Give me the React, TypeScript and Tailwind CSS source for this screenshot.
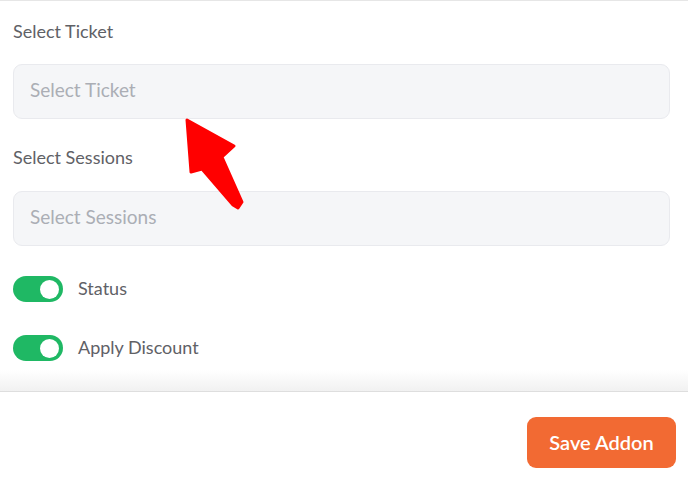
import React from "react";

function Toggle() {
  return (
    <div className="w-[50px] h-[26px] rounded-full bg-[#1fb864] flex items-center justify-end pr-[4px] shrink-0">
      <div className="w-[19px] h-[19px] rounded-full bg-white" />
    </div>
  );
}

export default function App() {
  return (
    <div
      className="relative w-[688px] h-[481px] bg-white overflow-hidden"
      style={{ fontFamily: "Lato, 'Noto Sans', sans-serif" }}
    >
      <div className="h-px bg-[#e6e6e6]" />
      <div className="pl-[13px] pr-[18px]">
        <div className="mt-[18px] h-[24px] leading-[24px] text-[18px] text-[#5f6166]">Select Ticket</div>
        <div className="mt-[21px] h-[55px] rounded-[9px] bg-[#f5f6f8] border border-[#e9eaee] flex items-center pl-[16px] pb-[3px] text-[19px] leading-[24px] text-[#abaeb5]">
          Select Ticket
        </div>
        <div className="mt-[26px] h-[24px] leading-[24px] text-[18px] text-[#5f6166]">Select Sessions</div>
        <div className="mt-[22px] h-[55px] rounded-[9px] bg-[#f5f6f8] border border-[#e9eaee] flex items-center pl-[16px] pb-[3px] text-[19px] leading-[24px] text-[#abaeb5]">
          Select Sessions
        </div>
        <div className="mt-[30px] flex items-center gap-[15px]">
          <Toggle />
          <span className="text-[18px] leading-[24px] pb-[2px] text-[#5f6166]">Status</span>
        </div>
        <div className="mt-[33px] flex items-center gap-[15px]">
          <Toggle />
          <span className="text-[18px] leading-[24px] pb-[2px] text-[#5f6166]">Apply Discount</span>
        </div>
      </div>
      <div className="mt-[9px] h-[22px] bg-gradient-to-b from-white to-[#f1f1f1] border-b border-[#dedede]" />
      <div className="flex justify-end pr-[12px] pt-[25px]">
        <button className="w-[149px] h-[51px] rounded-[9px] bg-[#f26a33] text-white text-[20px] font-semibold pb-[2px]">
          Save Addon
        </button>
      </div>
      <svg className="absolute left-0 top-0 pointer-events-none" width="688" height="481">
        <polygon
          points="187,120 234,146 222,157 242,202 238,208 233,205 202,169 191,172"
          fill="#ff0000"
          stroke="#ff0000"
          strokeWidth="3"
          strokeLinejoin="round"
        />
      </svg>
    </div>
  );
}
